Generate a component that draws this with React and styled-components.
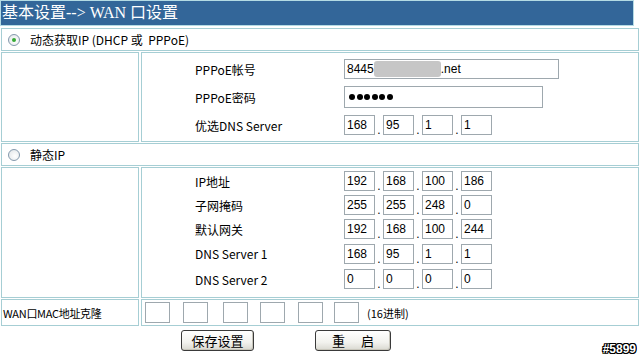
import React from "react";
import styled, { createGlobalStyle } from "styled-components";

const GlobalStyle = createGlobalStyle`
  body {
    margin: 0;
    background: #fff;
  }
`;

const Page = styled.div`
  position: relative;
  width: 640px;
  height: 357px;
  overflow: hidden;
  font-family: "Noto Sans CJK SC", sans-serif;
  font-size: 12px;
  color: #000;
`;

const Header = styled.div`
  box-sizing: border-box;
  width: 634px;
  height: 26px;
  border: 1px solid #b4dbe4;
  background: #336699;
  color: #fff;
  font-family: "Liberation Serif", "Noto Sans CJK SC", serif;
  font-size: 16px;
  line-height: 23px;
  padding-left: 1px;
  white-space: pre;
`;

const Table = styled.div`
  display: flex;
  flex-direction: column;
  gap: 1px;
  width: 638px;
  margin: 2px 0 0 1px;
`;

const Row = styled.div`
  display: flex;
  gap: 2px;
  height: ${props => props.height}px;
`;

const Cell = styled.div`
  box-sizing: border-box;
  border: 1px solid #a6ced4;
  width: ${props => (props.width ? `${props.width}px` : "auto")};
  flex: ${props => (props.width ? "none" : "1")};
  display: flex;
  align-items: ${props => (props.top ? "flex-start" : "center")};
`;

const RadioLine = styled.label`
  display: flex;
  align-items: center;
  gap: 10px;
  padding-left: 6px;
  white-space: pre;
`;

const Radio = styled.span`
  position: relative;
  box-sizing: border-box;
  width: 12px;
  height: 12px;
  border-radius: 50%;
  border: 1px solid #8499ad;
  background: radial-gradient(circle at 60% 60%, #ffffff, #dfe3e6);

  &::after {
    content: "";
    display: ${props => (props.checked ? "block" : "none")};
    position: absolute;
    left: 3px;
    top: 3px;
    width: 4px;
    height: 4px;
    border-radius: 50%;
    background: #36a936;
  }
`;

const FormGrid = styled.div`
  display: grid;
  grid-template-columns: 149px auto;
  grid-template-rows: ${props => props.rows};
  align-items: center;
  padding: ${props => props.padTop}px 0 0 53px;
  width: 100%;
`;

const Label = styled.div`
  white-space: pre;
`;

const Field = styled.div`
  box-sizing: border-box;
  display: flex;
  align-items: center;
  width: ${props => props.width}px;
  height: ${props => props.height || 20}px;
  border: 1px solid #9ea8ae;
  padding-left: 2px;
  font-family: "Liberation Sans", Arial, sans-serif;
  font-size: 12px;
  background: #fff;
`;

const Blur = styled.span`
  display: inline-block;
  width: 67px;
  height: 16px;
  border-radius: 3px;
  background: #c6c6c6;
  filter: blur(0.6px);
`;

const Dots = styled.div`
  display: flex;
  gap: 1.5px;
  padding-left: 2px;
`;

const Dot = styled.span`
  width: 6px;
  height: 6px;
  border-radius: 50%;
  background: #000;
`;

const IpGroup = styled.div`
  display: flex;
  align-items: flex-end;
`;

const Sep = styled.span`
  width: 8px;
  text-align: center;
  font-family: "Liberation Sans", Arial, sans-serif;
  font-size: 12px;
  line-height: 10px;
`;

const MacCell = styled.div`
  display: flex;
  align-items: center;
  padding-left: 3px;
`;

const MacBox = styled.div`
  box-sizing: border-box;
  width: 25px;
  height: 21px;
  border: 1px solid #9ea8ae;
  margin-right: ${props => props.gap}px;
`;

const Hint = styled.span`
  font-size: 11px;
  margin-left: -1px;
`;

const MacLabel = styled.span`
  padding-left: 1px;
  font-size: 11px;
  letter-spacing: -0.3px;
`;

const Buttons = styled.div`
  display: flex;
  gap: 61px;
  margin: 4px 0 0 181px;
`;

const Button = styled.button`
  box-sizing: border-box;
  width: ${props => props.width}px;
  height: 21px;
  padding: 0;
  display: flex;
  align-items: center;
  justify-content: center;
  gap: ${props => props.gap || 0}px;
  border: 1px solid #3a3a3a;
  border-radius: 3px;
  background: linear-gradient(#ffffff, #f2f2ee 60%, #d9d8d0);
  box-shadow: inset -1px -1px 0 #c8c6bb;
  font-family: "Noto Sans CJK SC", sans-serif;
  font-size: 13px;
  color: #000;
`;

const Mark = styled.span`
  position: absolute;
  right: 4px;
  bottom: 1px;
  font-family: "Liberation Sans", Arial, sans-serif;
  font-weight: bold;
  font-size: 12px;
  color: #fff;
  text-shadow: 1px 0 0 #000, -1px 0 0 #000, 0 1px 0 #000, 0 -1px 0 #000,
    1px 1px 0 #000, -1px -1px 0 #000, 1px -1px 0 #000, -1px 1px 0 #000;
`;

const Ip = ({ parts }) => (
  <IpGroup>
    {parts.map((p, i) => (
      <React.Fragment key={i}>
        {i > 0 && <Sep>.</Sep>}
        <Field width={31}>{p}</Field>
      </React.Fragment>
    ))}
  </IpGroup>
);

const staticRows = [
  ["IP地址", ["192", "168", "100", "186"]],
  ["子网掩码", ["255", "255", "248", "0"]],
  ["默认网关", ["192", "168", "100", "244"]],
  ["DNS Server 1", ["168", "95", "1", "1"]],
  ["DNS Server 2", ["0", "0", "0", "0"]]
];

const macGaps = [13, 15, 12, 13, 11, 9];

const App = () => (
  <Page>
    <GlobalStyle />
    <Header>{"基本设置--> WAN 口设置"}</Header>
    <Table>
      <Row height={23}>
        <Cell>
          <RadioLine>
            <Radio checked />
            {"动态获取IP (DHCP 或  PPPoE)"}
          </RadioLine>
        </Cell>
      </Row>
      <Row height={90}>
        <Cell width={138} />
        <Cell top>
          <FormGrid rows="28px 28px 28px" padTop={2}>
            <Label>PPPoE帐号</Label>
            <Field width={215}>
              8445
              <Blur />
              .net
            </Field>
            <Label>PPPoE密码</Label>
            <Field width={199} height={22}>
              <Dots>
                {[0, 1, 2, 3, 4, 5].map(i => (
                  <Dot key={i} />
                ))}
              </Dots>
            </Field>
            <Label>优选DNS Server</Label>
            <Ip parts={["168", "95", "1", "1"]} />
          </FormGrid>
        </Cell>
      </Row>
      <Row height={23}>
        <Cell>
          <RadioLine>
            <Radio />
            静态IP
          </RadioLine>
        </Cell>
      </Row>
      <Row height={131}>
        <Cell width={138} />
        <Cell top>
          <FormGrid rows="24px 24px 24px 25px 26px" padTop={1}>
            {staticRows.map(([label, parts]) => (
              <React.Fragment key={label}>
                <Label>{label}</Label>
                <Ip parts={parts} />
              </React.Fragment>
            ))}
          </FormGrid>
        </Cell>
      </Row>
      <Row height={27}>
        <Cell width={138}>
          <MacLabel>WAN口MAC地址克隆</MacLabel>
        </Cell>
        <Cell>
          <MacCell>
            {macGaps.map((g, i) => (
              <MacBox key={i} gap={g} />
            ))}
            <Hint>(16进制)</Hint>
          </MacCell>
        </Cell>
      </Row>
    </Table>
    <Buttons>
      <Button width={73}>保存设置</Button>
      <Button width={76} gap={16}>
        <span>重</span>
        <span>启</span>
      </Button>
    </Buttons>
    <Mark>#5899</Mark>
  </Page>
);

export default App;
